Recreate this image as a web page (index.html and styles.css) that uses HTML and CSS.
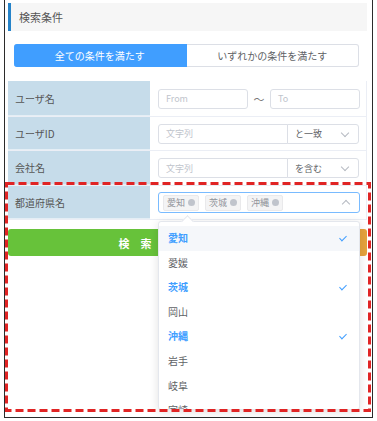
FILE: index.html
```html
<!DOCTYPE html>
<html lang="ja">
<head>
    <meta charset="UTF-8">
    <title>検索条件</title>
    <link rel="stylesheet" href="styles.css">
</head>
<body>
<div class="frame">
    <div class="panel-title">検索条件</div>

    <div class="toggle">
        <button class="toggle-btn active">全ての条件を満たす</button>
        <button class="toggle-btn">いずれかの条件を満たす</button>
    </div>

    <div class="cond-table">
        <div class="cond-row r1">
            <div class="cond-label">ユーザ名</div>
            <div class="cond-field">
                <div class="input w-range">From</div>
                <span class="tilde">〜</span>
                <div class="input w-range">To</div>
            </div>
        </div>
        <div class="cond-row r2">
            <div class="cond-label">ユーザID</div>
            <div class="cond-field">
                <div class="input w-text">文字列</div>
                <div class="select">と一致<span class="chev down"></span></div>
            </div>
        </div>
        <div class="cond-row r3">
            <div class="cond-label">会社名</div>
            <div class="cond-field">
                <div class="input w-text">文字列</div>
                <div class="select">を含む<span class="chev down"></span></div>
            </div>
        </div>
        <div class="cond-row r4">
            <div class="cond-label">都道府県名</div>
            <div class="cond-field">
                <div class="multi">
                    <span class="tag">愛知<i class="tag-x"></i></span>
                    <span class="tag">茨城<i class="tag-x"></i></span>
                    <span class="tag">沖縄<i class="tag-x"></i></span>
                    <span class="chev up"></span>
                </div>
            </div>
        </div>
    </div>

    <div class="actions">
        <button class="btn-search">検　索</button>
        <button class="btn-clear">クリア</button>
    </div>

    <div class="dropdown">
        <span class="dd-arrow"></span>
        <ul class="dd-list">
            <li class="sel hover">愛知<span class="check"></span></li>
            <li>愛媛</li>
            <li class="sel">茨城<span class="check"></span></li>
            <li>岡山</li>
            <li class="sel">沖縄<span class="check"></span></li>
            <li>岩手</li>
            <li>岐阜</li>
            <li>宮崎</li>
        </ul>
    </div>

    <svg class="callout" width="366" height="230" viewBox="0 0 366 230">
        <rect x="1.5" y="1.5" width="363" height="227" fill="none" stroke="#e02424" stroke-width="3" stroke-dasharray="8 4"/>
    </svg>
</div>
</body>
</html>
```

FILE: styles.css
```css
body {
    margin: 0;
    background-color: #fff;
    font-family: "Noto Sans CJK JP", "Noto Sans", sans-serif;
    color: #606266;
}

.frame {
    position: relative;
    margin-left: 4px;
    width: 369px;
    height: 418px;
    border: 1px solid #2b2b2b;
    border-top: none;
    padding: 3px 5px 0 3px;
    box-sizing: border-box;
    overflow: hidden;
}

.panel-title {
    height: 28px;
    line-height: 28px;
    background-color: #f6f6f6;
    border-left: 3px solid #2583c9;
    padding-left: 8px;
    font-size: 11px;
    color: #555;
}

.toggle {
    display: flex;
    margin: 13px 8px 0 6px;
    height: 23px;
}

.toggle-btn {
    flex: 1;
    font-family: inherit;
    font-size: 10px;
    color: #606266;
    background-color: #fff;
    border: 1px solid #dcdfe6;
    border-left: none;
    border-radius: 0 3px 3px 0;
    padding: 0;
}

.toggle-btn.active {
    background-color: #409eff;
    border-color: #409eff;
    color: #fff;
    border-radius: 3px 0 0 3px;
}

.cond-table {
    margin-top: 14px;
    border-right: 1px solid #ebeef5;
}

.cond-row {
    display: flex;
    border-bottom: 1px solid #ebeef5;
}

.r1 { height: 35px; }
.r2 { height: 33px; }
.r3 { height: 34px; }
.r4 { height: 33px; }

.cond-label {
    width: 142px;
    background-color: #c6dcea;
    border-bottom: 1px solid #e4eef5;
    font-size: 10px;
    color: #555;
    display: flex;
    align-items: center;
    padding-left: 7px;
    box-sizing: border-box;
}

.cond-field {
    flex: 1;
    display: flex;
    align-items: center;
    padding-left: 8px;
}

.input, .select {
    height: 20px;
    border: 1px solid #dcdfe6;
    border-radius: 3px;
    box-sizing: border-box;
    font-size: 9px;
    color: #c0c4cc;
    display: flex;
    align-items: center;
    padding-left: 7px;
    background-color: #fff;
}

.w-range { width: 90px; }
.w-text {
    width: 130px;
    border-radius: 3px 0 0 3px;
}

.tilde {
    width: 22px;
    text-align: center;
    font-size: 11px;
    color: #777;
}

.select {
    width: 72px;
    margin-left: -1px;
    border-radius: 0 3px 3px 0;
    color: #606266;
    position: relative;
}

.chev {
    position: absolute;
    right: 10px;
    width: 5px;
    height: 5px;
    border-right: 1px solid #b6bac2;
    border-bottom: 1px solid #b6bac2;
}

.chev.down {
    top: 5px;
    transform: rotate(45deg);
}

.multi {
    position: relative;
    width: 202px;
    height: 21px;
    border: 1px solid #79bbff;
    border-radius: 3px;
    box-sizing: border-box;
    display: flex;
    align-items: center;
    gap: 6px;
    padding-left: 4px;
}

.chev.up {
    top: 8px;
    transform: rotate(225deg);
}

.tag {
    display: flex;
    align-items: center;
    gap: 3px;
    height: 14px;
    padding: 0 3px;
    background-color: #f4f4f5;
    border: 1px solid #e9e9eb;
    border-radius: 2px;
    font-size: 9px;
    color: #909399;
}

.tag-x {
    width: 7px;
    height: 7px;
    border-radius: 50%;
    background-color: #c0c4cc;
}

.actions {
    display: flex;
    gap: 6px;
    margin-top: 9px;
    height: 27px;
}

.actions button {
    border: none;
    border-radius: 3px;
    font-family: inherit;
    font-size: 11px;
    font-weight: bold;
    color: #fff;
}

.btn-search {
    width: 254px;
    background-color: #67c23a;
}

.btn-clear {
    flex: 1;
    background-color: #e6a23c;
}

.dropdown {
    position: absolute;
    left: 153px;
    top: 221px;
    width: 202px;
    height: 189px;
    background-color: #fff;
    border: 1px solid #e4e7ed;
    border-radius: 3px;
    box-shadow: 0 2px 10px rgba(0, 0, 0, 0.12);
    box-sizing: border-box;
}

.dd-arrow {
    position: absolute;
    top: -5px;
    left: 24px;
    width: 8px;
    height: 8px;
    background-color: #fff;
    border-top: 1px solid #e4e7ed;
    border-left: 1px solid #e4e7ed;
    transform: rotate(45deg);
}

.dd-list {
    list-style: none;
    margin: 0;
    padding: 4px 0 0;
    height: 100%;
    overflow: hidden;
    box-sizing: border-box;
}

.dd-list li {
    position: relative;
    height: 24.6px;
    line-height: 24.6px;
    padding-left: 9px;
    font-size: 10px;
    color: #606266;
}

.dd-list li.hover {
    background-color: #f5f7fa;
}

.dd-list li.sel {
    color: #409eff;
    font-weight: bold;
}

.check {
    position: absolute;
    right: 14px;
    top: 8px;
    width: 3px;
    height: 6px;
    border-right: 1px solid #409eff;
    border-bottom: 1px solid #409eff;
    transform: rotate(45deg);
}

.callout {
    position: absolute;
    left: 0;
    top: 182px;
}
```
